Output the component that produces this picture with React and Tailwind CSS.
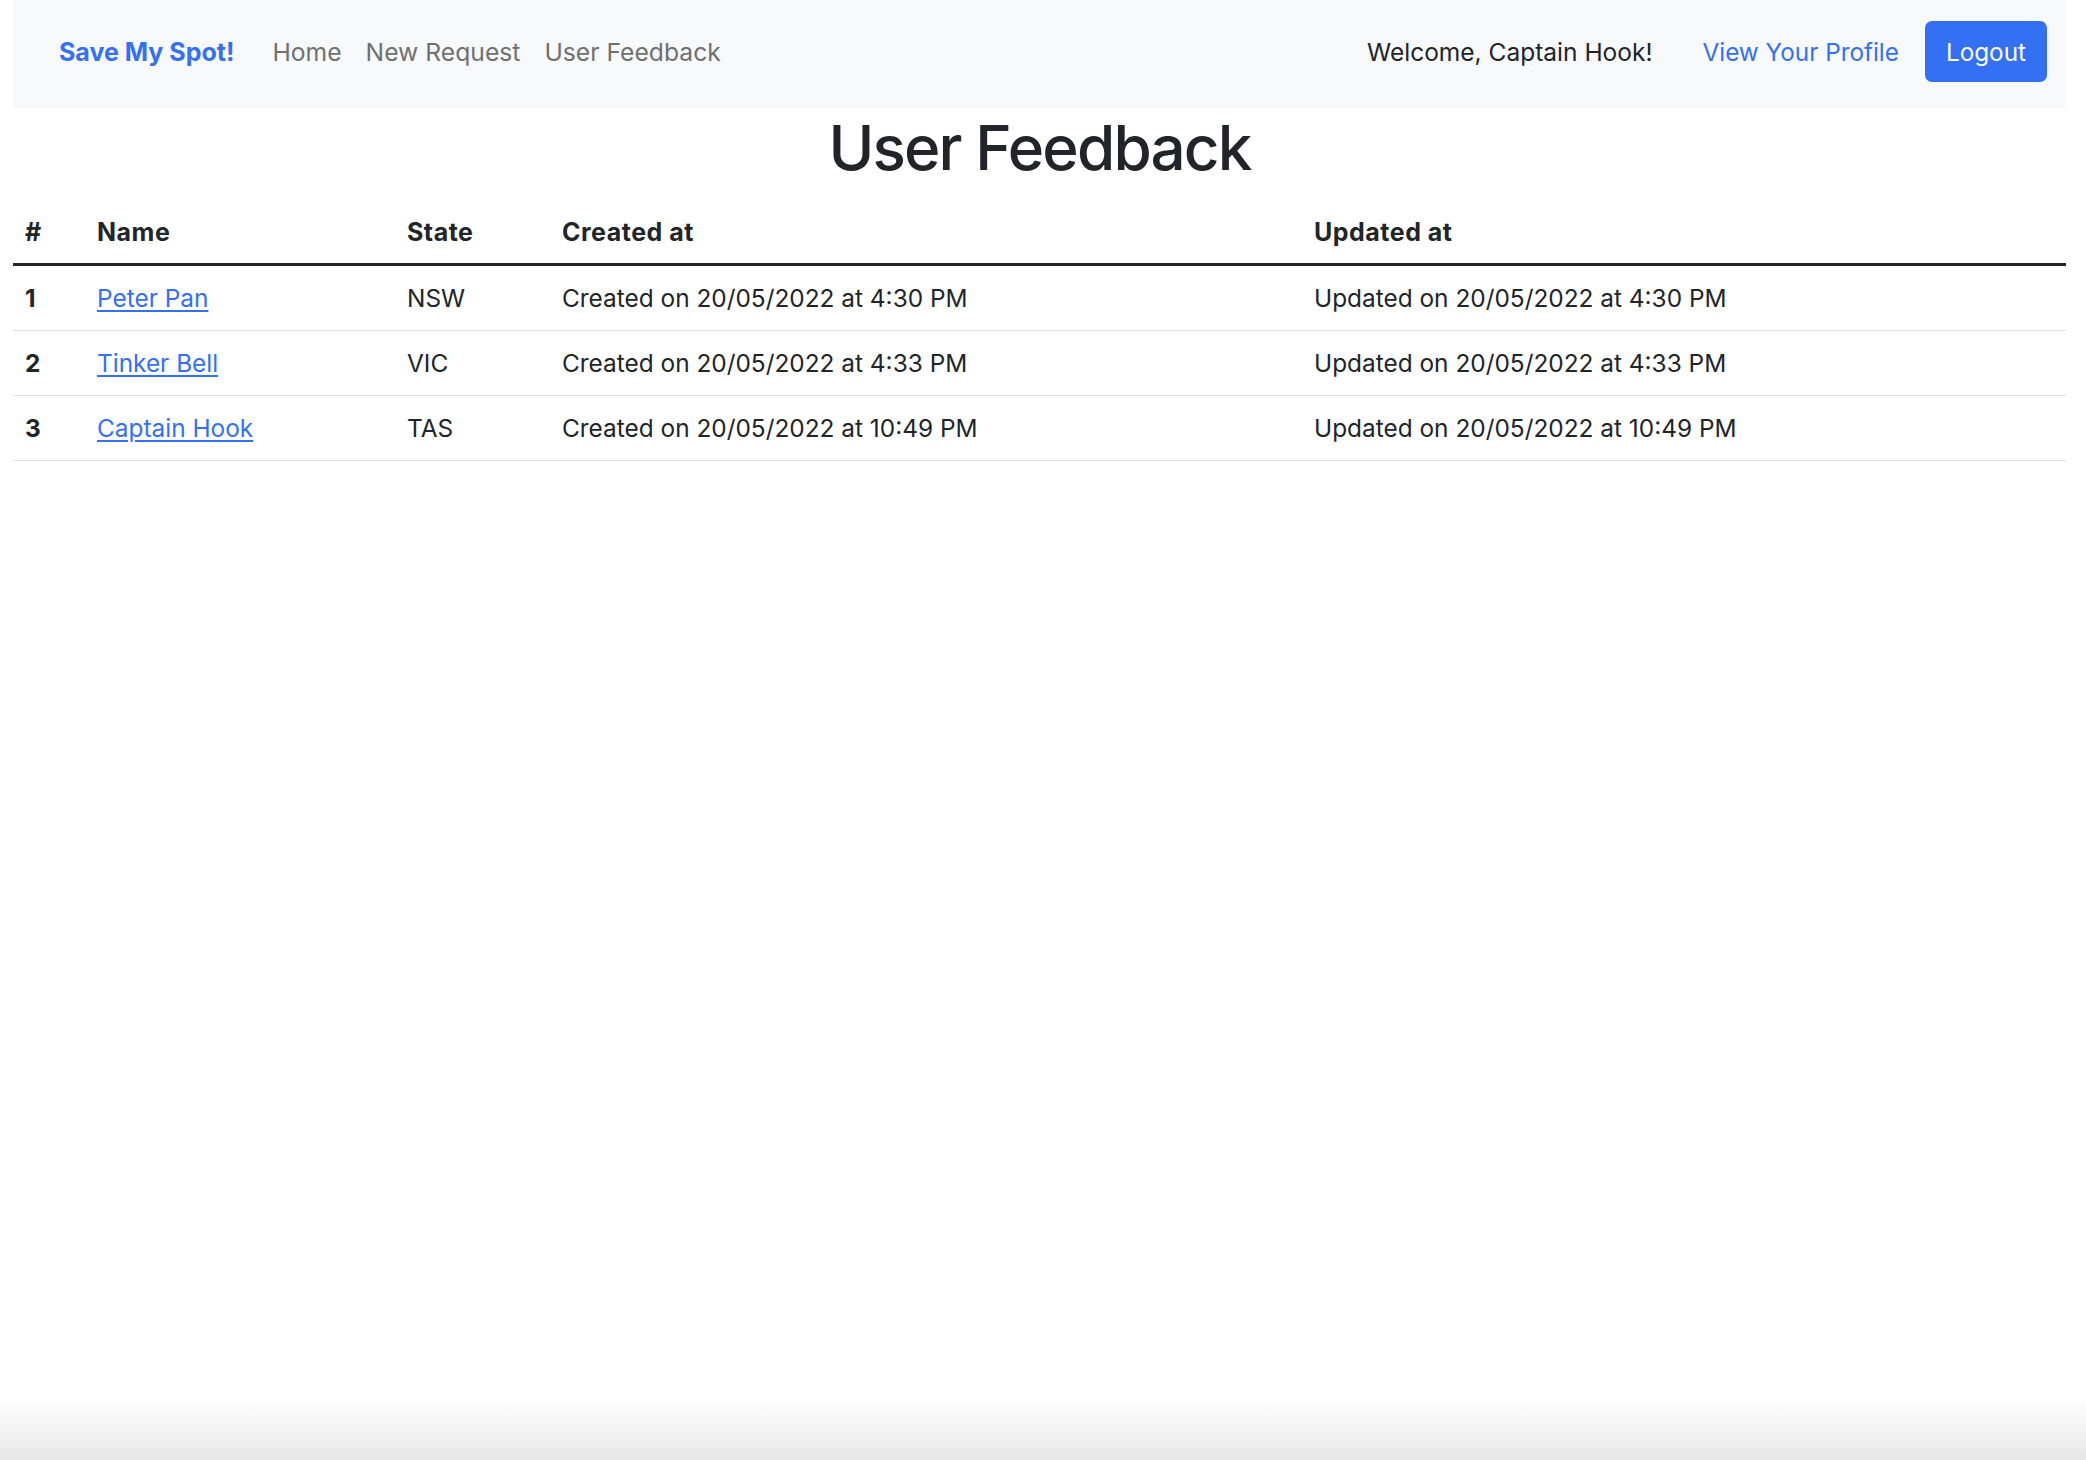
import React from 'react';

const rows = [
  { id: 1, name: 'Peter Pan', state: 'NSW', created: '20/05/2022 at 4:30 PM', updated: '20/05/2022 at 4:30 PM' },
  { id: 2, name: 'Tinker Bell', state: 'VIC', created: '20/05/2022 at 4:33 PM', updated: '20/05/2022 at 4:33 PM' },
  { id: 3, name: 'Captain Hook', state: 'TAS', created: '20/05/2022 at 10:49 PM', updated: '20/05/2022 at 10:49 PM' },
];

const NavBar = () => (
  <nav className="flex items-center h-[108px] bg-[#f8f9fa] pl-[46px] pr-[19px] pt-[21px] pb-[26px]">
    <a href="#" className="text-[25px] leading-[36px] font-bold text-[#3470f4] mr-[26px]">
      Save My Spot!
    </a>
    <a href="#" className="px-[12px] text-[24.7px] leading-[36px] text-[#6f7071]">Home</a>
    <a href="#" className="px-[12px] text-[24.7px] leading-[36px] text-[#6f7071]">New Request</a>
    <a href="#" className="px-[12px] text-[24.7px] leading-[36px] text-[#6f7071]">User Feedback</a>

    <div className="ml-auto flex items-center">
      <span className="text-[24.5px] leading-[36px] text-[#212529]">Welcome, Captain Hook!</span>
      <a href="#" className="ml-[50px] text-[24.3px] leading-[36px] text-[#3470f4]">View Your Profile</a>
      <button className="ml-[26px] h-[61px] px-[21px] rounded-[7px] bg-[#3470f4] text-white text-[24.3px] leading-[36px]">
        Logout
      </button>
    </div>
  </nav>
);

const FeedbackTable = () => (
  <table className="w-full table-fixed text-[24.4px] leading-[36px] text-[#212529]">
    <colgroup>
      <col className="w-[72px]" />
      <col className="w-[310px]" />
      <col className="w-[155px]" />
      <col className="w-[752px]" />
      <col />
    </colgroup>
    <thead>
      <tr>
        {['#', 'Name', 'State', 'Created at', 'Updated at'].map((h) => (
          <th
            key={h}
            className="text-left font-bold text-[25px] tracking-[0.02em] px-[12px] pt-[15px] pb-[13px] border-b-[3px] border-[#212529]"
          >
            {h}
          </th>
        ))}
      </tr>
    </thead>
    <tbody>
      {rows.map((row) => (
        <tr key={row.id}>
          <td className="px-[12px] py-[14px] font-bold border-b border-[#dee2e6]">{row.id}</td>
          <td className="px-[12px] py-[14px] border-b border-[#dee2e6]">
            <a href="#" className="text-[#3470f4] underline underline-offset-[3px]">{row.name}</a>
          </td>
          <td className="px-[12px] py-[14px] border-b border-[#dee2e6]">{row.state}</td>
          <td className="px-[12px] py-[14px] border-b border-[#dee2e6] whitespace-nowrap">Created on {row.created}</td>
          <td className="px-[12px] py-[14px] border-b border-[#dee2e6] whitespace-nowrap">Updated on {row.updated}</td>
        </tr>
      ))}
    </tbody>
  </table>
);

export default function App() {
  return (
    <div className="min-h-[1460px] flex flex-col bg-white font-['Inter','Liberation_Sans',sans-serif]">
      <div className="ml-[13px] mr-[20px]">
        <NavBar />
        <h1 className="mt-[4px] mb-[15px] text-center text-[62px] leading-[72px] font-medium tracking-[-0.03em] text-[#212529]">
          User Feedback
        </h1>
        <FeedbackTable />
      </div>
      <div className="flex-1" />
      <div className="h-[62px] bg-linear-to-b from-white to-[#e7e7e7]" />
    </div>
  );
}
